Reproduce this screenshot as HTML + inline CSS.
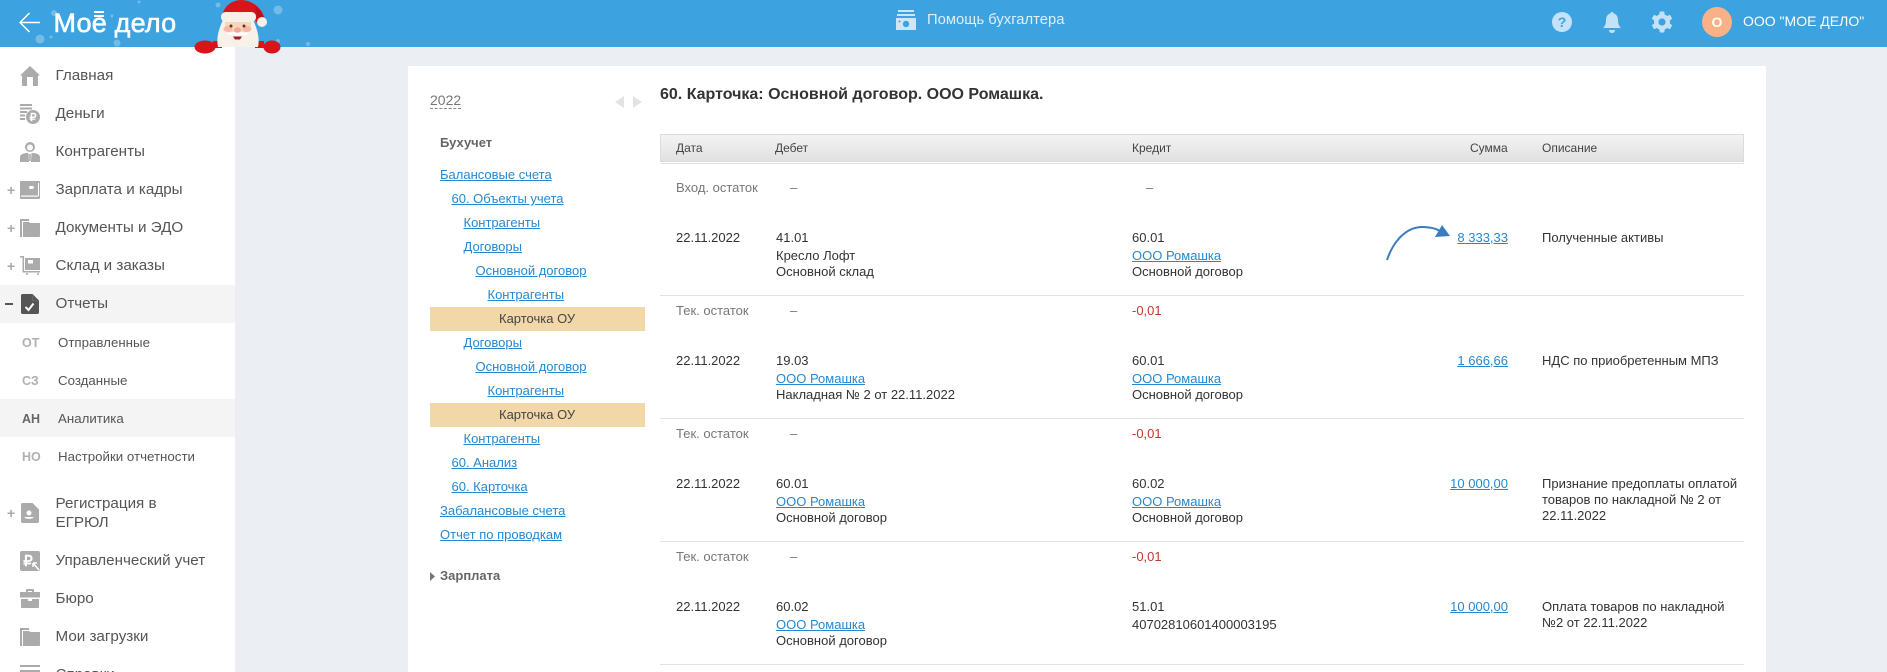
<!DOCTYPE html>
<html lang="ru"><head><meta charset="utf-8"><title>Моё дело</title>
<style>
html,body{margin:0;padding:0;width:1887px;height:672px;overflow:hidden;background:#ebeef2;font-family:"Liberation Sans",Arial,sans-serif}
#r{position:relative;width:1887px;height:672px;overflow:hidden}
.a{position:absolute}
.t{position:absolute;white-space:nowrap;line-height:20px;font-size:13px;color:#333}
.n{position:absolute;left:55.5px;white-space:nowrap;line-height:20px;font-size:15.2px;color:#555}
.s{position:absolute;left:58px;white-space:nowrap;line-height:20px;font-size:13.3px;color:#555}
.c{position:absolute;left:22px;white-space:nowrap;line-height:20px;font-size:12.5px;font-weight:bold;color:#b0b0b0}
.l{position:absolute;white-space:nowrap;line-height:20px;font-size:13px;color:#2688d0;text-decoration:underline}
.g{color:#777}.r{color:#c0392b}
.h{position:absolute;left:660px;width:1084px;height:1px;background:#e2e2e2}
.p{position:absolute;left:7px;font-size:14px;font-weight:bold;color:#aaa;line-height:20px;white-space:nowrap}
svg.i{position:absolute;left:20px}
</style></head><body><div id="r">

<div class="a" style="left:0;top:0;width:1887px;height:47px;background:#3ca2e0"></div>
<div class="a" style="left:0;top:47px;width:235px;height:625px;background:#fff"></div>
<div class="a" style="left:408px;top:66px;width:1358px;height:606px;background:#fff"></div>

<!-- snow -->
<svg class="a" style="left:0;top:0" width="320" height="47">
<g fill="#fff" opacity=".28"><circle cx="40" cy="39" r="4.500"/><circle cx="117" cy="43" r="3.500"/><circle cx="54" cy="13" r="3"/><circle cx="218" cy="5" r="2.500"/><circle cx="278" cy="10" r="4.500"/><circle cx="51" cy="37" r="1.500"/><circle cx="112" cy="16" r="1.500"/><circle cx="139" cy="2" r="1.500"/><circle cx="308" cy="44" r="2"/><circle cx="278" cy="41" r="2"/></g></svg>

<!-- back arrow -->
<svg class="a" style="left:19px;top:12px" width="22" height="22" fill="none" stroke="#fff" stroke-width="1.500"><path d="M1 10.500H21M10.500 1L1 10.500L10.500 20"/></svg>

<!-- logo -->
<div class="a" style="left:53.500px;top:5px;line-height:36px;font-size:27px;color:#fff;white-space:nowrap;-webkit-text-stroke:.6px #fff;letter-spacing:.2px">Мое дело</div>
<div class="a" style="left:94px;top:11px;width:10px;height:2px;background:#fff"></div>
<div class="a" style="left:94px;top:15px;width:10px;height:2px;background:#fff"></div>

<!-- santa -->
<svg class="a" style="left:190px;top:0" width="100" height="56" viewBox="190 0 100 56">
<path d="M222 16C224 6 232 0 241 0C251 0 258 6 262 12L266 21L258 24L255 20H222Z" fill="#d9151c"/>
<path d="M255 6C259 9 263 14 265 20L258 23Z" fill="#bf1017"/>
<rect x="213" y="41" width="9" height="7" fill="#d9151c"/><rect x="255" y="41" width="9" height="7" fill="#d9151c"/>
<path d="M218 47C216 38 219 28 223 20H253C257 28 260 38 258 47Z" fill="#f8f1ea"/>
<path d="M225 22H251V30C247 34 229 34 225 30Z" fill="#f8d6bd"/>
<rect x="221" y="12" width="35" height="10" rx="4.500" fill="#f6f0e9"/>
<circle cx="262" cy="22" r="5" fill="#f6f0e9"/>
<ellipse cx="228" cy="29" rx="4.500" ry="3" fill="#f8b7a5"/><ellipse cx="247" cy="29" rx="4.500" ry="3" fill="#f8b7a5"/>
<circle cx="231" cy="26" r="1.500" fill="#5a3a1c"/><circle cx="244" cy="26" r="1.500" fill="#5a3a1c"/>
<path d="M227 34C232 31 243 31 249 34C245 36 231 36 227 34Z" fill="#fff"/>
<ellipse cx="237.500" cy="30" rx="3.500" ry="2.800" fill="#f5a69a"/>
<path d="M233 36.500H242L240 39.500H235Z" fill="#a81c22"/>
<ellipse cx="205" cy="47" rx="10.500" ry="6.500" fill="#d9151c"/>
<ellipse cx="272" cy="47" rx="8.500" ry="6.500" fill="#d9151c"/>
</svg>

<!-- center header -->
<svg class="a" style="left:896px;top:9px" width="21" height="22" fill="#cde6f8"><rect x="2" y="1" width="16" height="2"/><rect x="1" y="5" width="18" height="2"/><path d="M0 9H20V21H0Z"/><circle cx="10" cy="15" r="3.200" fill="#3ca2e0"/><circle cx="3.500" cy="12.500" r="1" fill="#3ca2e0"/></svg>
<div class="t" style="left:927px;top:10px;font-size:14.800px;color:#dcefFB">Помощь бухгалтера</div>

<!-- right header -->
<svg class="a" style="left:1551px;top:11px" width="22" height="22"><circle cx="11" cy="11" r="10" fill="#c4e2f7"/><text x="11" y="16" text-anchor="middle" font-size="14" font-weight="bold" fill="#3ca2e0" font-family="Liberation Sans">?</text></svg>
<svg class="a" style="left:1602px;top:11px" width="20" height="22" fill="#c4e2f7"><path d="M10 1C11 1 11.500 1.600 11.500 2.400C14.600 3.200 16 6 16 9C16 13 17 15 19 17H1C3 15 4 13 4 9C4 6 5.400 3.200 8.500 2.400C8.500 1.600 9 1 10 1Z"/><path d="M7 19H13C13 21 11.500 22 10 22C8.500 22 7 21 7 19Z"/></svg>
<svg class="a" style="left:1651px;top:11px" width="22" height="22" viewBox="-11 -11 22 22"><g fill="#c4e2f7"><circle r="8"/><rect x="-2.500" y="-10.500" width="5" height="21" rx="1"/><rect x="-2.500" y="-10.500" width="5" height="21" rx="1" transform="rotate(60)"/><rect x="-2.500" y="-10.500" width="5" height="21" rx="1" transform="rotate(120)"/></g><circle r="3.600" fill="#3ca2e0"/></svg>
<div class="a" style="left:1702px;top:7px;width:30px;height:30px;border-radius:50%;background:#fab185;color:#fff;font-size:14px;font-weight:bold;line-height:30px;text-align:center">О</div>
<div class="t" style="left:1743px;top:11px;font-size:14px;color:#fff">ООО "МОЕ ДЕЛО"</div>

<!-- sidebar highlight -->
<div class="a" style="left:0;top:285px;width:235px;height:38px;background:#f4f4f4"></div>
<div class="a" style="left:0;top:399px;width:235px;height:38px;background:#f4f4f4"></div>

<!-- sidebar icons -->
<svg class="i" style="top:66px" width="20" height="20" fill="#ababab"><path d="M10 0L20 9.500H18V19C18 19.600 17.600 20 17 20H13V11H7V20H3C2.400 20 2 19.600 2 19V9.500H0Z"/></svg>
<svg class="i" style="top:104px" width="20" height="20" fill="#ababab"><rect width="12" height="2"/><rect y="3.500" width="12" height="2"/><rect y="7" width="7" height="2"/><rect y="10.500" width="5" height="2"/><rect y="14" width="5" height="2"/><circle cx="13" cy="13" r="7"/><text x="13" y="17" text-anchor="middle" font-size="11" font-weight="bold" fill="#fff" font-family="Liberation Sans">₽</text></svg>
<svg class="i" style="top:142px" width="20" height="20" fill="#ababab"><circle cx="10" cy="5" r="5"/><circle cx="10" cy="5.500" r="3" fill="#fff"/><path d="M0 20V15C0 13 3 11 7 11H8.500L9 20ZM20 20V15C20 13 17 11 13 11H11.500L11 20Z"/><rect x="9.200" y="12" width="1.600" height="7"/></svg>
<svg class="i" style="top:181px" width="20" height="18" fill="#ababab"><rect width="20" height="18" rx="1"/><rect x="1" y="14.500" width="17" height="1.200" fill="#fff"/><rect x="18" y="2" width="1" height="13" fill="#fff"/><rect x="9" y="5" width="5" height="3" rx="1.500" fill="#fff"/></svg>
<svg class="i" style="top:219px" width="20" height="18" fill="#ababab"><rect width="2" height="18"/><rect width="9" height="2"/><path d="M3 3H9L10 4H20V17C20 17.600 19.600 18 19 18H3Z"/></svg>
<svg class="i" style="top:256px" width="20" height="19" fill="#ababab"><path d="M0 0H4V15H20V16.500H2.500V1.500H0Z"/><path d="M5 2H20V14H5ZM8 4V7.500H13V4Z" fill-rule="evenodd"/><circle cx="7" cy="18" r="1"/><circle cx="18" cy="18" r="1"/></svg>
<svg class="a" style="left:21px;top:294px" width="18" height="20"><path d="M1.500 0H11.500L18 6.500V18.500C18 19.300 17.300 20 16.500 20H1.500C.7 20 0 19.300 0 18.500V1.500C0 .7.7 0 1.500 0Z" fill="#555"/><path d="M4.500 13L7.500 16L12.500 9.500" stroke="#fff" stroke-width="2" fill="none"/><path d="M11.500 1.500V6.500H16.500" fill="none" stroke="#777" stroke-width=".6"/></svg>
<svg class="a" style="left:21px;top:503px" width="18" height="20"><path d="M1.500 0H11.500L18 6.500V18.500C18 19.300 17.300 20 16.500 20H1.500C.7 20 0 19.300 0 18.500V1.500C0 .7.7 0 1.500 0Z" fill="#ababab"/><circle cx="8" cy="10" r="2.500" fill="#fff"/><path d="M3.500 14H12.500C12.500 16.500 3.500 16.500 3.500 14Z" fill="#fff"/></svg>
<svg class="i" style="top:551px" width="20" height="20"><rect width="20" height="20" rx="2" fill="#ababab"/><text x="8" y="15" text-anchor="middle" font-size="15" font-weight="bold" fill="#fff" font-family="Liberation Sans">₽</text><path d="M13 12L19 19M13 12H17M13 12V16" stroke="#fff" stroke-width="1.500" fill="none"/></svg>
<svg class="i" style="top:589px" width="20" height="19" fill="#ababab"><path d="M6 3V1C6 .4 6.400 0 7 0H13C13.600 0 14 .4 14 1V3H20V8.500H0V3ZM8 2V3H12V2Z"/><path d="M1 10H8V12H12V10H19V18C19 18.600 18.600 19 18 19H2C1.400 19 1 18.600 1 18Z"/></svg>
<svg class="i" style="top:628px" width="20" height="18" fill="#ababab"><rect width="2" height="18"/><rect width="9" height="2"/><path d="M3 3H9L10 4H20V17C20 17.600 19.600 18 19 18H3Z"/></svg>
<div class="a" style="left:20px;top:665px;width:20px;height:2px;background:#ababab"></div>
<div class="a" style="left:20px;top:670px;width:20px;height:2px;background:#ababab"></div>

<!-- sidebar text -->
<div class="n" style="top:66px">Главная</div>
<div class="n" style="top:104px">Деньги</div>
<div class="n" style="top:142px">Контрагенты</div>
<div class="p" style="top:180px">+</div><div class="n" style="top:180px">Зарплата и кадры</div>
<div class="p" style="top:218px">+</div><div class="n" style="top:218px">Документы и ЭДО</div>
<div class="p" style="top:256px">+</div><div class="n" style="top:256px">Склад и заказы</div>
<div class="a" style="left:5px;top:303px;width:8px;height:2px;background:#555"></div><div class="n" style="top:294px">Отчеты</div>
<div class="c" style="top:333px">ОТ</div><div class="s" style="top:333px">Отправленные</div>
<div class="c" style="top:371px">СЗ</div><div class="s" style="top:371px">Созданные</div>
<div class="c" style="top:409px;color:#666">АН</div><div class="s" style="top:409px">Аналитика</div>
<div class="c" style="top:447px">НО</div><div class="s" style="top:447px">Настройки отчетности</div>
<div class="p" style="top:503px">+</div><div class="n" style="top:494px">Регистрация в</div>
<div class="n" style="top:513px">ЕГРЮЛ</div>
<div class="n" style="top:551px">Управленческий учет</div>
<div class="n" style="top:589px">Бюро</div>
<div class="n" style="top:627px">Мои загрузки</div>
<div class="n" style="top:665px">Справки</div>

<!-- tree -->
<div class="t g" style="left:430px;top:90px;font-size:14px">2022</div>
<div class="a" style="left:430px;top:108px;width:31px;border-top:1px dashed #888"></div>
<svg class="a" style="left:615px;top:96px" width="28" height="12" fill="#e3e3e3"><path d="M0 6L9 0V12Z"/><path d="M18 0L27 6L18 12Z"/></svg>
<div class="t" style="left:440px;top:133px;font-weight:bold;color:#666">Бухучет</div>
<div class="l" style="left:440px;top:165px">Балансовые счета</div>
<div class="l" style="left:451.500px;top:189px">60. Объекты учета</div>
<div class="l" style="left:463.500px;top:213px">Контрагенты</div>
<div class="l" style="left:463.500px;top:237px">Договоры</div>
<div class="l" style="left:475.500px;top:261px">Основной договор</div>
<div class="l" style="left:487.500px;top:285px">Контрагенты</div>
<div class="a" style="left:430px;top:307px;width:215px;height:24px;background:#f2d7a9"></div>
<div class="t" style="left:499px;top:309px;color:#444">Карточка ОУ</div>
<div class="l" style="left:463.500px;top:333px">Договоры</div>
<div class="l" style="left:475.500px;top:357px">Основной договор</div>
<div class="l" style="left:487.500px;top:381px">Контрагенты</div>
<div class="a" style="left:430px;top:403px;width:215px;height:24px;background:#f2d7a9"></div>
<div class="t" style="left:499px;top:405px;color:#444">Карточка ОУ</div>
<div class="l" style="left:463.500px;top:429px">Контрагенты</div>
<div class="l" style="left:451.500px;top:453px">60. Анализ</div>
<div class="l" style="left:451.500px;top:477px">60. Карточка</div>
<div class="l" style="left:440px;top:501px">Забалансовые счета</div>
<div class="l" style="left:440px;top:525px">Отчет по проводкам</div>
<svg class="a" style="left:430px;top:572px" width="6" height="9" fill="#777"><path d="M0 0L5 4.500L0 9Z"/></svg>
<div class="t" style="left:440px;top:566px;font-weight:bold;color:#666">Зарплата</div>

<!-- title -->
<div class="t" style="left:660px;top:85px;font-size:16px;font-weight:bold;color:#333">60. Карточка: Основной договор. ООО Ромашка.</div>

<!-- table head -->
<div class="a" style="left:660px;top:134px;width:1082px;height:27px;background:linear-gradient(#f3f3f3,#e0e0e0);border:1px solid #dcdcdc;border-bottom:1px solid #fff"></div>
<div class="a" style="left:661px;top:163px;width:1083px;height:1px;background:#e2e2e2"></div>
<div class="t" style="left:676px;top:138px;font-size:12px;color:#444">Дата</div>
<div class="t" style="left:775px;top:138px;font-size:12px;color:#444">Дебет</div>
<div class="t" style="left:1132px;top:138px;font-size:12px;color:#444">Кредит</div>
<div class="t" style="left:1470px;top:138px;font-size:12px;color:#444">Сумма</div>
<div class="t" style="left:1542px;top:138px;font-size:12px;color:#444">Описание</div>

<!-- row 0 -->
<div class="t g" style="left:676px;top:178px">Вход. остаток</div>
<div class="t g" style="left:790px;top:178px">–</div>
<div class="t g" style="left:1146px;top:178px">–</div>

<!-- row 1 -->
<div class="t" style="left:676px;top:228px">22.11.2022</div>
<div class="t" style="left:776px;top:228px">41.01</div>
<div class="t" style="left:776px;top:246px">Кресло Лофт</div>
<div class="t" style="left:776px;top:262px">Основной склад</div>
<div class="t" style="left:1132px;top:228px">60.01</div>
<div class="l" style="left:1132px;top:246px">ООО Ромашка</div>
<div class="t" style="left:1132px;top:262px">Основной договор</div>
<div class="l" style="right:379px;top:228px">8 333,33</div>
<div class="t" style="left:1542px;top:228px">Полученные активы</div>
<svg class="a" style="left:1380px;top:220px" width="75" height="45" fill="none"><path d="M7 40C13 22 26 6 44 7C50 7.500 55 8 60 11" stroke="#3a7cc0" stroke-width="2"/><path d="M70 16L55 17L62 5Z" fill="#3a7cc0"/></svg>
<div class="h" style="top:295px"></div>

<!-- row 2 -->
<div class="t g" style="left:676px;top:301px">Тек. остаток</div>
<div class="t g" style="left:790px;top:301px">–</div>
<div class="t r" style="left:1132px;top:301px">-0,01</div>
<div class="t" style="left:676px;top:351px">22.11.2022</div>
<div class="t" style="left:776px;top:351px">19.03</div>
<div class="l" style="left:776px;top:369px">ООО Ромашка</div>
<div class="t" style="left:776px;top:385px">Накладная № 2 от 22.11.2022</div>
<div class="t" style="left:1132px;top:351px">60.01</div>
<div class="l" style="left:1132px;top:369px">ООО Ромашка</div>
<div class="t" style="left:1132px;top:385px">Основной договор</div>
<div class="l" style="right:379px;top:351px">1 666,66</div>
<div class="t" style="left:1542px;top:351px">НДС по приобретенным МПЗ</div>
<div class="h" style="top:418px"></div>

<!-- row 3 -->
<div class="t g" style="left:676px;top:424px">Тек. остаток</div>
<div class="t g" style="left:790px;top:424px">–</div>
<div class="t r" style="left:1132px;top:424px">-0,01</div>
<div class="t" style="left:676px;top:474px">22.11.2022</div>
<div class="t" style="left:776px;top:474px">60.01</div>
<div class="l" style="left:776px;top:492px">ООО Ромашка</div>
<div class="t" style="left:776px;top:508px">Основной договор</div>
<div class="t" style="left:1132px;top:474px">60.02</div>
<div class="l" style="left:1132px;top:492px">ООО Ромашка</div>
<div class="t" style="left:1132px;top:508px">Основной договор</div>
<div class="l" style="right:379px;top:474px">10 000,00</div>
<div class="t" style="left:1542px;top:474px">Признание предоплаты оплатой</div>
<div class="t" style="left:1542px;top:490px">товаров по накладной № 2 от</div>
<div class="t" style="left:1542px;top:506px">22.11.2022</div>
<div class="h" style="top:541px"></div>

<!-- row 4 -->
<div class="t g" style="left:676px;top:547px">Тек. остаток</div>
<div class="t g" style="left:790px;top:547px">–</div>
<div class="t r" style="left:1132px;top:547px">-0,01</div>
<div class="t" style="left:676px;top:597px">22.11.2022</div>
<div class="t" style="left:776px;top:597px">60.02</div>
<div class="l" style="left:776px;top:615px">ООО Ромашка</div>
<div class="t" style="left:776px;top:631px">Основной договор</div>
<div class="t" style="left:1132px;top:597px">51.01</div>
<div class="t" style="left:1132px;top:615px">40702810601400003195</div>
<div class="l" style="right:379px;top:597px">10 000,00</div>
<div class="t" style="left:1542px;top:597px">Оплата товаров по накладной</div>
<div class="t" style="left:1542px;top:613px">№2 от 22.11.2022</div>
<div class="h" style="top:664px"></div>

</div></body></html>
